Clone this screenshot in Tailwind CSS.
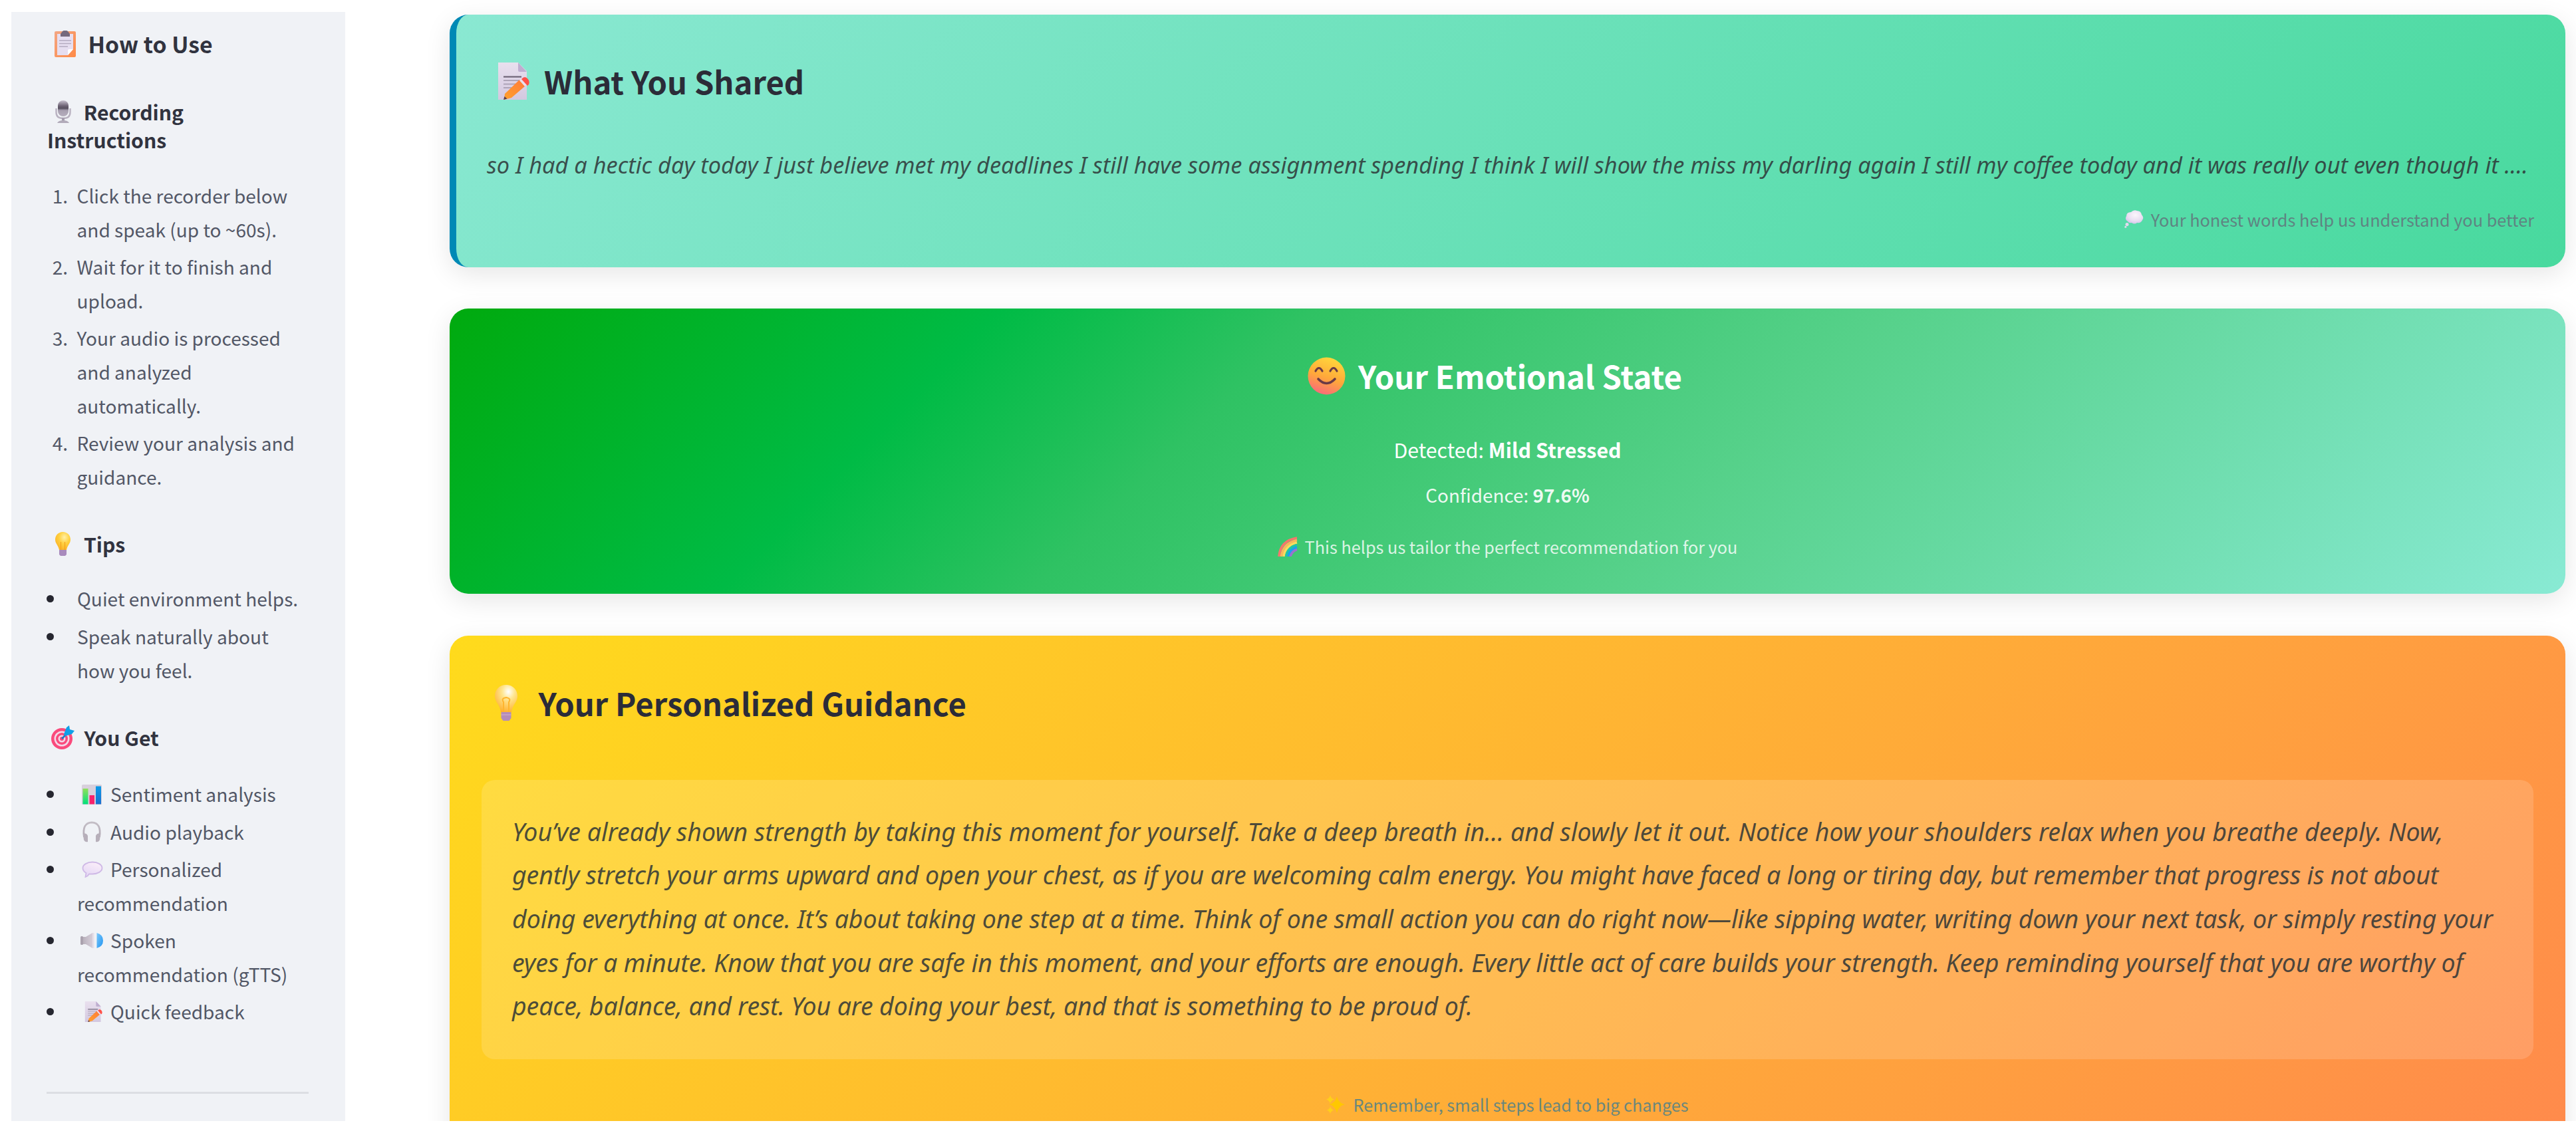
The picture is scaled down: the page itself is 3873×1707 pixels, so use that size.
<!DOCTYPE html>
<html lang="en">
<head>
<meta charset="utf-8">
<title>Emotional wellness check-in</title>
<script src="https://cdn.jsdelivr.net/npm/@tailwindcss/browser@4"></script>
</head>
<body class="h-[1707px] w-[3873px] overflow-hidden bg-white font-['Noto_Sans_CJK_SC','Noto_Sans',sans-serif] text-[#31333f]">
<svg width="0" height="0" class="absolute">
  <defs>
    <linearGradient id="board" x1="0" y1="0" x2="1" y2="1"><stop offset="0" stop-color="#f3a683"/><stop offset="1" stop-color="#ff8a45"/></linearGradient>
    <linearGradient id="paper" x1="0" y1="0" x2="0" y2="1"><stop offset="0" stop-color="#e9e0ee"/><stop offset="1" stop-color="#d3c8e0"/></linearGradient>
    <linearGradient id="pencil" x1="1" y1="0" x2="0" y2="1"><stop offset="0" stop-color="#ff7a3c"/><stop offset="1" stop-color="#ffa12c"/></linearGradient>
    <linearGradient id="mic" x1="0" y1="0" x2="0" y2="1"><stop offset="0" stop-color="#c9c3d0"/><stop offset=".35" stop-color="#6c6273"/><stop offset=".5" stop-color="#57505f"/><stop offset=".62" stop-color="#a79fb0"/><stop offset="1" stop-color="#b5aebd"/></linearGradient>
    <radialGradient id="bulb" cx=".6" cy=".3" r=".7"><stop offset="0" stop-color="#fff0a8"/><stop offset=".5" stop-color="#ffd03f"/><stop offset="1" stop-color="#fbb528"/></radialGradient>
    <radialGradient id="bulbGlow" cx=".6" cy=".25" r=".8"><stop offset="0" stop-color="#ffffff"/><stop offset=".35" stop-color="#ffe690"/><stop offset="1" stop-color="#ffae2b"/></radialGradient>
    <linearGradient id="face" x1=".7" y1="0" x2=".35" y2="1"><stop offset="0" stop-color="#ffd93b"/><stop offset=".55" stop-color="#ffa83a"/><stop offset="1" stop-color="#f9697c"/></linearGradient>
    <linearGradient id="barGreen" x1="0" y1="0" x2="0" y2="1"><stop offset="0" stop-color="#8fe05a"/><stop offset="1" stop-color="#00e07c"/></linearGradient>
    <linearGradient id="barBlue" x1="0" y1="0" x2="0" y2="1"><stop offset="0" stop-color="#0a9be8"/><stop offset="1" stop-color="#1b6fcf"/></linearGradient>
    <linearGradient id="speech" x1=".7" y1="0" x2=".3" y2="1"><stop offset="0" stop-color="#fbeef9"/><stop offset="1" stop-color="#e3d6f5"/></linearGradient>
    <radialGradient id="thought" cx=".55" cy=".35" r=".7"><stop offset="0" stop-color="#fbf6fb"/><stop offset=".6" stop-color="#eadff2"/><stop offset="1" stop-color="#d1c0ea"/></radialGradient>
    <linearGradient id="headset" x1="0" y1="0" x2="0" y2="1"><stop offset="0" stop-color="#c4bec6"/><stop offset="1" stop-color="#b1a9b4"/></linearGradient>
    <linearGradient id="wave" x1="0" y1="0" x2="1" y2="1"><stop offset="0" stop-color="#7cc8fb"/><stop offset="1" stop-color="#1f93f0"/></linearGradient>
    <linearGradient id="cone" x1="0" y1="0" x2="1" y2="0"><stop offset="0" stop-color="#b3abb6"/><stop offset="1" stop-color="#d6ced9"/></linearGradient>

    <symbol id="memo" viewBox="0 0 48 56">
      <path d="M1 0h30l13 13v43H1z" fill="url(#paper)"/>
      <path d="M31 0l13 14h-11q-2 0-2-2z" fill="#bfaed0"/>
      <path d="M9 21.500h27" stroke="#6f6578" stroke-width="2.200"/>
      <path d="M9 27h25M9 32.500h20M9 38h14" stroke="#aea4b8" stroke-width="1.800"/>
      <path d="M11 47L33 26l9 9-21 18-11 3z" fill="url(#pencil)"/>
      <path d="M33 27l4-4 8 9-4 4z" fill="#e9e0ee"/>
      <path d="M37 24q4-4 8 0t2 9l-2 2-9-10z" fill="#ff5148"/>
      <path d="M10.500 51l4 3.500L9 56z" fill="#5b3f4a"/>
    </symbol>
  </defs>
</svg>

<div class="flex h-[1686px] overflow-hidden pl-[17px]">
  <!-- Sidebar -->
  <aside class="mt-[18px] w-[502px] shrink-0 bg-[#f0f2f6] pt-[26px] pr-[54px] pl-[55px] whitespace-nowrap">
    <h2 class="flex h-[44px] items-center text-[33.8px] leading-[44px] font-bold">
      <span class="w-[60.500px] pl-[9.600px]">
        <svg class="-mt-[1px] h-[40px] w-[32px]" viewBox="0 0 32 40"><rect y="1" width="32" height="39" rx="2" fill="url(#board)"/><path d="M4 5h24v23l-8 9H4z" fill="#e6def0"/><path d="M20 37v-7q0-2 2-2h6z" fill="#fff"/><path d="M12 1q4-3 8 0l3 4v4H9V5z" fill="#75697d"/><path d="M7 15h18M7 19.500h18M7 24h13" stroke="#b4abc0" stroke-width="1.600"/></svg>
      </span>How to Use
    </h2>

    <h3 class="mt-[59px] text-[30.200px] leading-[42px] font-bold">
      <span class="flex h-[42px] items-center">
        <span class="w-[53.700px] pl-[10.600px]">
          <svg class="h-[36px] w-[24px]" viewBox="0 0 24 36"><path d="M1.500 13v6q0 9 10.500 9t10.500-9v-6" fill="none" stroke="#b9b2c1" stroke-width="2.400"/><rect x="4" y="1" width="16" height="24" rx="8" fill="url(#mic)"/><path d="M12 27v5" stroke="#a59dae" stroke-width="4"/><path d="M3 35q2-4 9-4t9 4z" fill="#b2abba"/></svg>
        </span>Recording
      </span>
      <span class="-ml-[1px] block">Instructions</span>
    </h3>

    <ol class="mt-[37.800px] flex flex-col gap-[5.500px] text-[28.050px] leading-[50.850px] text-[#525766]">
      <li class="flex"><span class="mr-[13.500px] w-[30px] text-right">1.</span><span>Click the recorder below<br>and speak (up to ~60s).</span></li>
      <li class="flex"><span class="mr-[13.500px] w-[30px] text-right">2.</span><span>Wait for it to finish and<br>upload.</span></li>
      <li class="flex"><span class="mr-[13.500px] w-[30px] text-right">3.</span><span>Your audio is processed<br>and analyzed<br>automatically.</span></li>
      <li class="flex"><span class="mr-[13.500px] w-[30px] text-right">4.</span><span>Review your analysis and<br>guidance.</span></li>
    </ol>

    <h3 class="mt-[54px] flex h-[42px] items-center text-[30.200px] leading-[42px] font-bold">
      <span class="w-[54px] pl-[11px]">
        <svg class="h-[36px] w-[23px]" viewBox="0 0 23 36"><path d="M11.500 0C18 0 23 5 23 11.500c0 6-4.500 8-6 15.500H6C4.500 19.500 0 17.500 0 11.500 0 5 5 0 11.500 0z" fill="url(#bulb)"/><path d="M8.500 27V15M14.500 27V15" stroke="#f3a31f" stroke-width="1.200"/><path d="M6 27h11v7l-2 2H8l-2-2z" fill="#a98bbd"/></svg>
      </span>Tips
    </h3>
    <ul class="mt-[36.500px] flex flex-col gap-[5.600px] text-[28.100px] leading-[50.800px] text-[#525766]">
      <li class="flex"><span class="mt-[20px] mr-[35.500px] -ml-[2.500px] size-[11px] rounded-full bg-[#262730]"></span><span>Quiet environment helps.</span></li>
      <li class="flex"><span class="mt-[20px] mr-[35.500px] -ml-[2.500px] size-[11px] rounded-full bg-[#262730]"></span><span>Speak naturally about<br>how you feel.</span></li>
    </ul>

    <h3 class="mt-[54.600px] flex h-[42px] items-center text-[30.200px] leading-[42px] font-bold">
      <span class="w-[54.500px] pl-[4.500px]">
        <svg class="h-[36px] w-[35px]" viewBox="0 0 35 36"><circle cx="16" cy="20" r="16" fill="#fa4a7c"/><circle cx="16" cy="20" r="11.500" fill="#f3d9e8"/><circle cx="16" cy="20" r="9" fill="#fa4a7c"/><circle cx="16" cy="20" r="5.500" fill="#f3d9e8"/><circle cx="16" cy="20" r="3" fill="#fa4a7c"/><path d="M16 20l9-9" stroke="#1b78c8" stroke-width="2.600"/><path d="M19 13l4-10 4-3 1 6 7 2-4 5-10 3z" fill="#109fe8"/></svg>
      </span>You Get
    </h3>
    <ul class="mt-[39.200px] flex flex-col gap-[5.600px] text-[28.100px] leading-[50.800px] text-[#525766]">
      <li class="flex"><span class="mt-[20px] mr-[35.500px] -ml-[2.500px] size-[11px] rounded-full bg-[#262730]"></span>
        <span class="flex h-[50.800px] items-center"><span class="w-[50px] pl-[6.500px]"><svg class="h-[30px] w-[30px]" viewBox="0 0 30 30"><rect width="30" height="30" rx="1.500" fill="#d8d0dc"/><rect x="1.500" y="6" width="8" height="23.500" fill="url(#barGreen)"/><rect x="11.500" y="16" width="7.500" height="13.500" fill="#f8226c"/><rect x="21" y="2.500" width="8" height="27" fill="url(#barBlue)"/></svg></span>Sentiment analysis</span></li>
      <li class="flex"><span class="mt-[20px] mr-[35.500px] -ml-[2.500px] size-[11px] rounded-full bg-[#262730]"></span>
        <span class="flex h-[50.800px] items-center"><span class="w-[50px] pl-[7px]"><svg class="h-[32px] w-[30px]" viewBox="0 0 30 32"><path d="M3.500 24Q0 2.500 15 1.800 30 2.500 26.500 24" fill="none" stroke="url(#headset)" stroke-width="2.800"/><path d="M2 19q5-2 7 3v9q-4 1-6-3zM28 19q-5-2-7 3v9q4 1 6-3z" fill="#b7afba"/></svg></span>Audio playback</span></li>
      <li class="flex"><span class="mt-[20px] mr-[35.500px] -ml-[2.500px] size-[11px] rounded-full bg-[#262730]"></span>
        <span><span class="flex h-[50.800px] items-center"><span class="w-[50px] pl-[7px]"><svg class="h-[25px] w-[32px]" viewBox="0 0 32 25"><path d="M16 1.500c8 0 14.500 4 14.500 9s-6.500 9-14.500 9l-5 0Q9 23 5.500 24l1-6Q1.500 15 1.500 10.500c0-5 6.500-9 14.500-9z" fill="url(#speech)" stroke="#cfb9e6" stroke-width="1.800"/></svg></span>Personalized</span><span class="block">recommendation</span></span></li>
      <li class="flex"><span class="mt-[20px] mr-[35.500px] -ml-[2.500px] size-[11px] rounded-full bg-[#262730]"></span>
        <span><span class="flex h-[50.800px] items-center"><span class="w-[50px] pl-[5px]"><svg class="h-[25px] w-[35px]" viewBox="0 0 35 25"><path d="M1 7h7l10-6v23L8 18H1z" fill="url(#cone)"/><rect y="6" width="4" height="13" rx="1.500" fill="#aaa2ae"/><path d="M18 1l2.500 0v23L18 24z" fill="#e5dfe8"/><path d="M24.500 1Q34 3.500 34 12.500T24.500 24z" fill="url(#wave)"/></svg></span>Spoken</span><span class="block">recommendation (gTTS)</span></span></li>
      <li class="flex"><span class="mt-[20px] mr-[35.500px] -ml-[2.500px] size-[11px] rounded-full bg-[#262730]"></span>
        <span class="flex h-[50.800px] items-center"><span class="w-[50px] pl-[11px]"><svg class="h-[31px] w-[27px]"><use href="#memo"/></svg></span>Quick feedback</span></li>
    </ul>

    <hr class="mt-[95px] -ml-[2px] w-[394px] border-t-[3px] border-[#dcdee3]">
  </aside>

  <!-- Results -->
  <main class="flex grow flex-col pt-[22px] pr-[16px] pl-[157px] whitespace-nowrap">
    <section class="h-[380px] shrink-0 rounded-[28px] border-l-[10px] border-[#0089b5] bg-[linear-gradient(135deg,#8ae8d2,#48d99e)] pt-[70px] pr-[47px] pl-[46px] shadow-[0_10px_38px_rgba(0,0,0,0.1)]">
      <h2 class="flex h-[60px] items-center text-[47.200px] leading-[60px] font-bold text-[#2b2c38]">
        <span class="w-[86px] pl-[16px]"><svg class="h-[56px] w-[48px]"><use href="#memo"/></svg></span>What You Shared
      </h2>
      <p class="mt-[65.700px] font-['Noto_Sans',sans-serif] text-[34.330px] leading-[60px] text-[#2d3436]/85 italic">so I had a hectic day today I just believe met my deadlines I still have some assignment spending I think I will show the miss my darling again I still my coffee today and it was really out even though it ....</p>
      <p class="mt-[30px] flex h-[44px] items-center justify-end text-[25.300px] leading-[44px] text-[#5f8482]">
        <svg class="mr-[11px] h-[27px] w-[29px]" viewBox="0 0 29 27"><path d="M5 17Q0 14 3 9q0-6 7-6 4-4 9-2 6 0 7 6 4 4 1 8-2 5-8 4-4 3-8 0-4 1-6-2z" fill="url(#thought)"/><circle cx="4" cy="21.500" r="2.500" fill="#e4d8ef"/><circle cx="1.800" cy="25.300" r="1.500" fill="#e4d8ef"/></svg>Your honest words help us understand you better
      </p>
    </section>

    <section class="mt-[62px] h-[429px] shrink-0 rounded-[28px] bg-[linear-gradient(135deg,#00aa0e,#00bb45_23%,#2fc263_36%,#56d18a_60%,#89ead4)] pt-[71.400px] text-white shadow-[0_10px_38px_rgba(0,0,0,0.1)]">
      <h2 class="flex h-[60px] items-center justify-center pr-[38px] text-[47.300px] leading-[60px] font-bold">
        <svg class="mr-[19px] h-[57px] w-[57px]" viewBox="0 0 57 57"><circle cx="28.500" cy="28.500" r="28" fill="url(#face)"/><path d="M12 21q5-9 10 0M34 21q5-9 10 0" fill="none" stroke="#6b3a45" stroke-width="3.200" stroke-linecap="round"/><path d="M16 33q12.500 13 25 0" fill="none" stroke="#6b3a45" stroke-width="3.600" stroke-linecap="round"/></svg>Your Emotional State
      </h2>
      <p class="mt-[55.600px] text-center text-[30.400px] leading-[50px]">Detected: <b>Mild Stressed</b></p>
      <p class="mt-[18.200px] text-center text-[27.900px] leading-[50px] opacity-90">Confidence: <b>97.6%</b></p>
      <p class="mt-[30.500px] flex h-[44px] items-center justify-center text-[25.250px] leading-[44px]">
        <svg class="mr-[11px] h-[30px] w-[30px]" viewBox="0 0 30 30"><g fill="none" stroke-width="3.700"><path d="M2 30Q4 6 29 2" stroke="#f4776c"/><path d="M5.500 30Q8 10 29 5.500" stroke="#fdb45c"/><path d="M9 30q2.500-17 20-21" stroke="#f8dc5f"/><path d="M12.500 30Q15 16 29 12.500" stroke="#1fc3a8"/><path d="M16 30q2-11 13-14" stroke="#1a9ff0"/><path d="M19 30q2-8 10-10.500" stroke="#9a72cf"/></g></svg><span class="opacity-80">This helps us tailor the perfect recommendation for you</span>
      </p>
    </section>

    <section class="mt-[63px] h-[760px] shrink-0 rounded-t-[28px] bg-[linear-gradient(135deg,#ffdb1c,#ff8a4c)] px-[48px] pt-[70.600px] shadow-[0_10px_38px_rgba(0,0,0,0.1)]">
      <h2 class="flex h-[60px] items-center text-[47.200px] leading-[60px] font-bold text-[#2b2c38]">
        <span class="w-[85.500px] pl-[20px]"><svg class="h-[54px] w-[34px]" viewBox="0 0 34 54"><path d="M17 0C27 0 34 7.500 34 17c0 9-7.500 12-9 24H9C7.500 29 0 26 0 17 0 7.500 7 0 17 0z" fill="url(#bulbGlow)"/><path d="M13 41V26q-4-6 4-7 8 1 4 7v15" fill="none" stroke="#ffb52e" stroke-width="2"/><path d="M9.500 41h15v9l-3 4h-9l-3-4z" fill="#b48cba"/><path d="M9.500 45h15" stroke="#c9a7c9" stroke-width="1.500"/></svg></span>Your Personalized Guidance
      </h2>
      <div class="mt-[86.200px] h-[420px] rounded-[20px] bg-white/15 pt-[45px] pl-[46px]">
        <p class="font-['Noto_Sans',sans-serif] text-[37.520px] leading-[65.650px] text-[#2d3436]/85 italic">
          <span class="block tracking-[0.020px]">You’ve already shown strength by taking this moment for yourself. Take a deep breath in… and slowly let it out. Notice how your shoulders relax when you breathe deeply. Now,</span>
          <span class="block tracking-[-0.125px]">gently stretch your arms upward and open your chest, as if you are welcoming calm energy. You might have faced a long or tiring day, but remember that progress is not about</span>
          <span class="block tracking-[-0.095px]">doing everything at once. It’s about taking one step at a time. Think of one small action you can do right now—like sipping water, writing down your next task, or simply resting your</span>
          <span class="block tracking-[-0.110px]">eyes for a minute. Know that you are safe in this moment, and your efforts are enough. Every little act of care builds your strength. Keep reminding yourself that you are worthy of</span>
          <span class="block tracking-[-0.140px]">peace, balance, and rest. You are doing your best, and that is something to be proud of.</span>
        </p>
      </div>
      <p class="mt-[46px] flex h-[44px] items-center justify-center text-[25.250px] leading-[44px] text-[#6a877c]">
        <svg class="mr-[12px] h-[28px] w-[28px]" viewBox="0 0 28 28"><path d="M16 2q2 10 12 12-10 2-12 13-2-11-12-13 10-2 12-12z" fill="#ffc800"/><path d="M6 0q1 5 6 6.500-5 1.500-6 6.500-1-5-6-6.500Q5 5 6 0zM6 17q1 4 5 5.500-4 1.500-5 5.500-1-4-5-5.500Q5 21 6 17z" fill="#ffcf1a"/></svg>Remember, small steps lead to big changes
      </p>
    </section>
  </main>
</div>
</body>
</html>
